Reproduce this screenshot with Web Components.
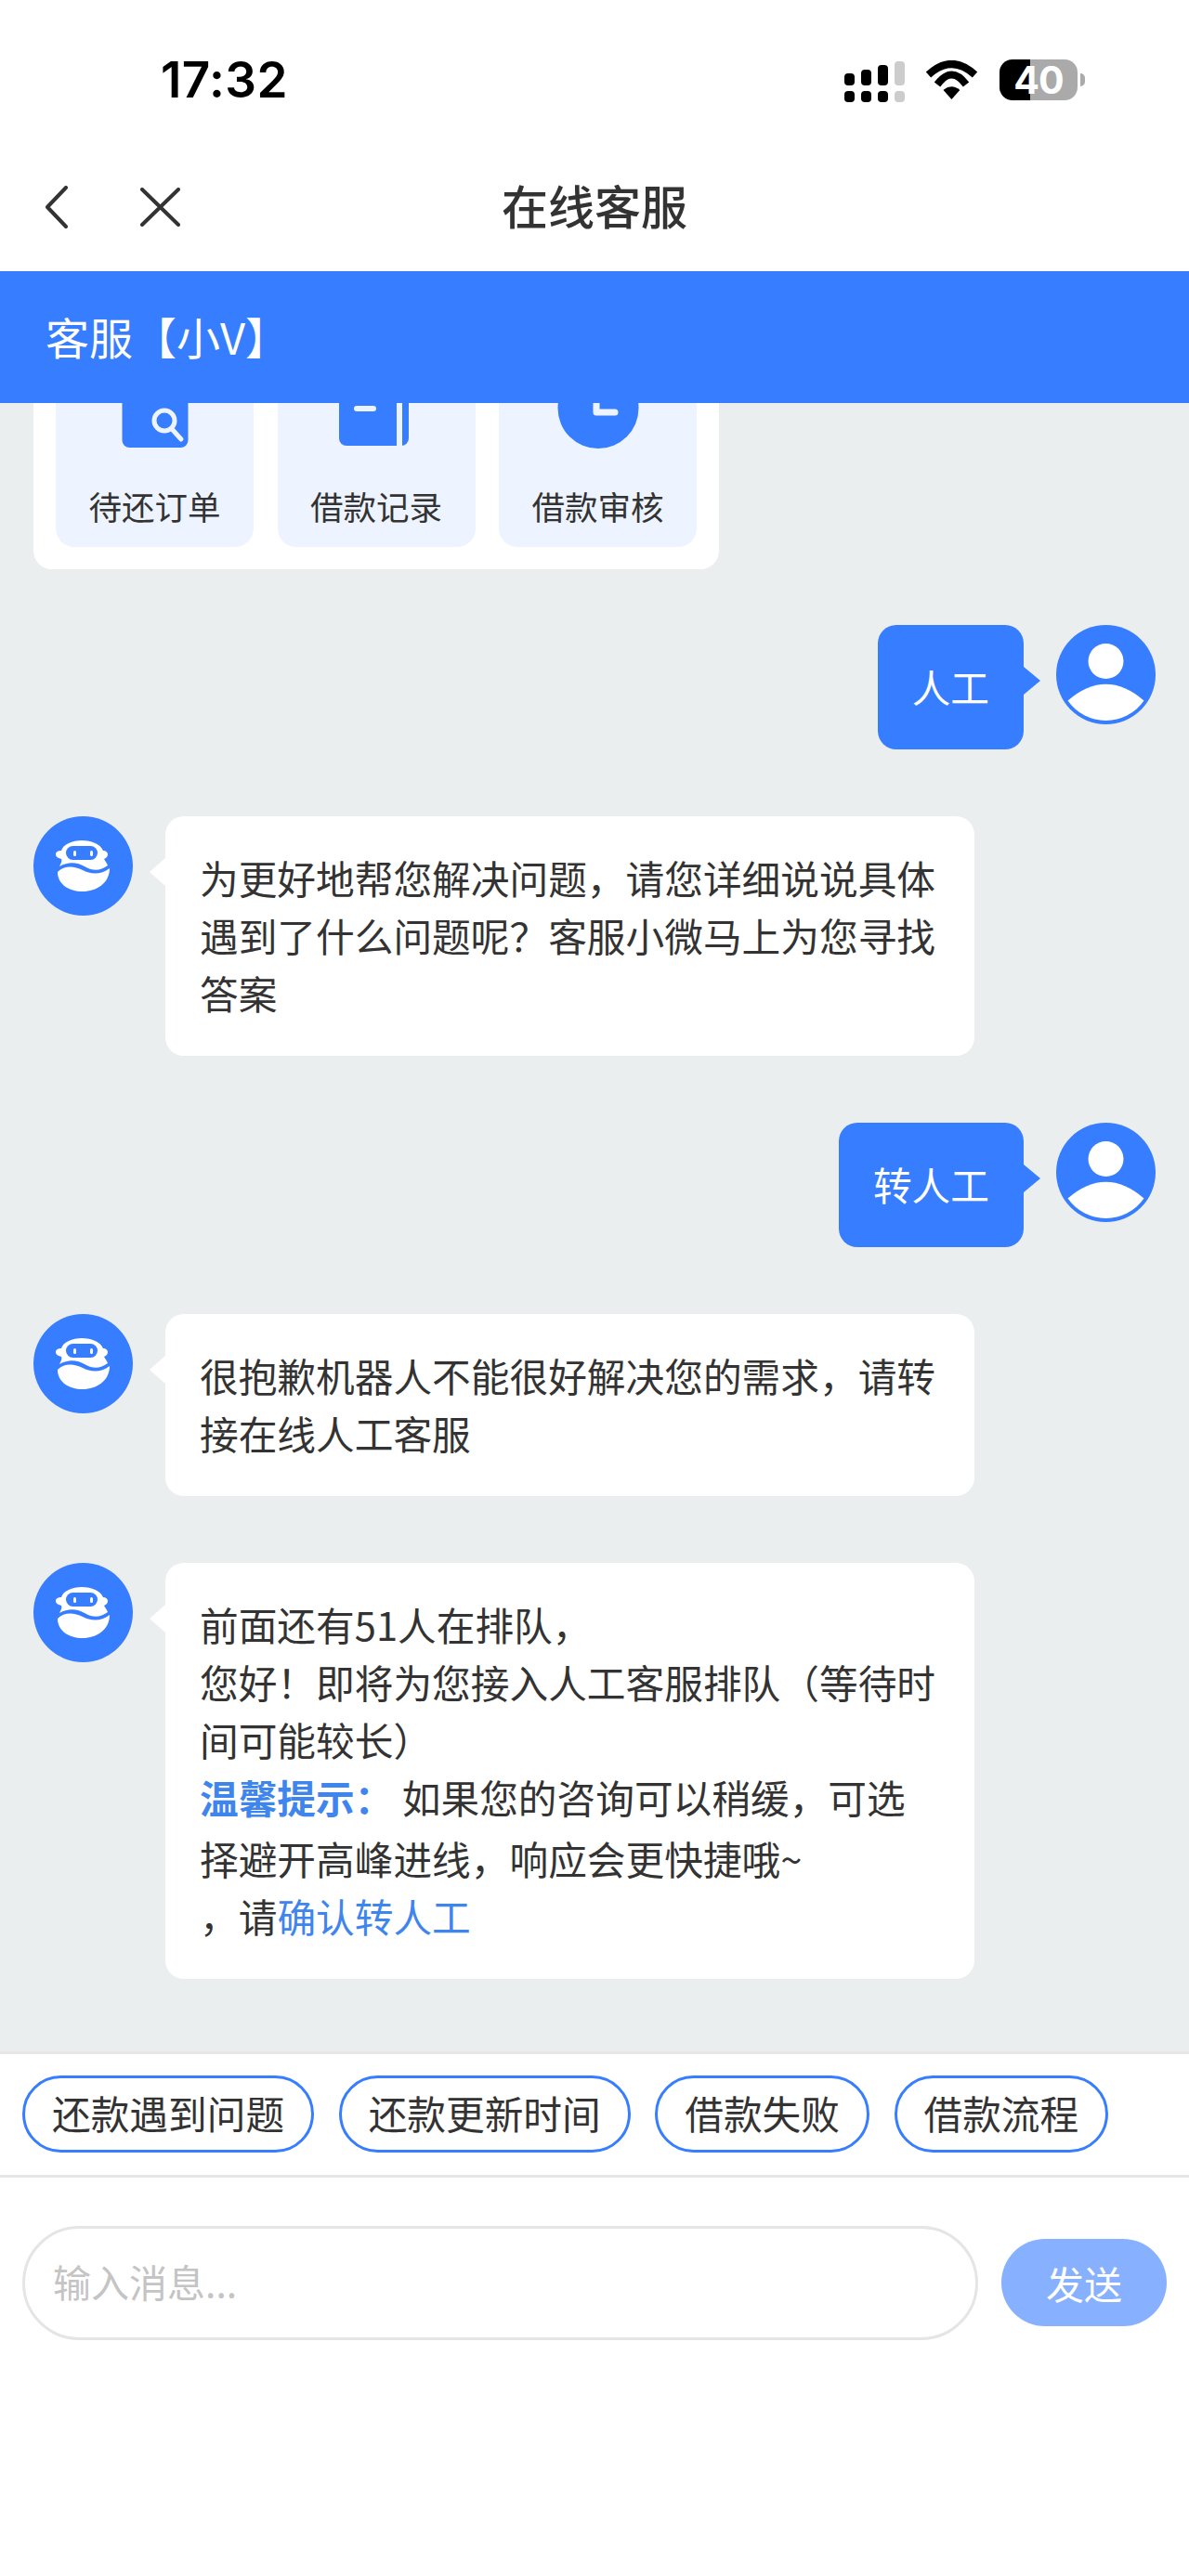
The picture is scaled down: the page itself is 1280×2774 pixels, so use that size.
<!DOCTYPE html>
<html lang="zh-CN">
<head>
<meta charset="utf-8">
<title>在线客服</title>
<style>
  html, body { margin: 0; padding: 0; background: #fff; }
  body { font-family: "Noto Sans CJK SC", "Noto Sans", sans-serif; color: #333; }
  .tip { color: #3f85ee; font-weight: 700; }
  .link { color: #3f85ee; }
  .after-tip { margin-top: 4px; }
</style>
</head>
<body>
<app-shell>
  <status-bar time="17:32" battery="40"></status-bar>
  <nav-bar title="在线客服"></nav-bar>
  <agent-bar>客服【小V】</agent-bar>
  <chat-list>
    <shortcut-card>
      <shortcut-tile icon="order">待还订单</shortcut-tile>
      <shortcut-tile icon="record">借款记录</shortcut-tile>
      <shortcut-tile icon="audit">借款审核</shortcut-tile>
    </shortcut-card>
    <chat-row side="user">人工</chat-row>
    <chat-row side="bot">为更好地帮您解决问题，请您详细说说具体遇到了什么问题呢？客服小微马上为您寻找答案</chat-row>
    <chat-row side="user">转人工</chat-row>
    <chat-row side="bot">很抱歉机器人不能很好解决您的需求，请转接在线人工客服</chat-row>
    <chat-row side="bot">
      <div>前面还有51人在排队，</div>
      <div>您好！即将为您接入人工客服排队（等待时间可能较长）</div>
      <div><span class="tip">温馨提示：</span> 如果您的咨询可以稍缓，可选</div>
      <div class="after-tip">择避开高峰进线，响应会更快捷哦~</div>
      <div>，请<span class="link">确认转人工</span></div>
    </chat-row>
  </chat-list>
  <quick-replies>
    <quick-chip>还款遇到问题</quick-chip>
    <quick-chip>还款更新时间</quick-chip>
    <quick-chip>借款失败</quick-chip>
    <quick-chip>借款流程</quick-chip>
  </quick-replies>
  <message-composer placeholder="输入消息..." action="发送"></message-composer>
</app-shell>

<script>
const BLUE = '#377dff';

class AppShell extends HTMLElement {
  constructor() {
    super();
    this.attachShadow({ mode: 'open' });
    this.shadowRoot.innerHTML = `
      <style>
        :host { display: flex; flex-direction: column; width: 1280px; height: 2774px; overflow: hidden; }
      </style>
      <slot></slot>
    `;
  }
}

class StatusBar extends HTMLElement {
  constructor() {
    super();
    this.attachShadow({ mode: 'open' });
  }

  connectedCallback() {
    const time = this.getAttribute('time') || '';
    const battery = this.getAttribute('battery') || '';
    this.shadowRoot.innerHTML = `
      <style>
        :host {
          display: flex;
          flex: none;
          justify-content: space-between;
          align-items: center;
          box-sizing: border-box;
          height: 112px;
          margin-bottom: 42px;
          padding: 60px 112px 0 173px;
          font-family: Inter, "Liberation Sans", sans-serif;
          color: #000;
        }
        .time { font-size: 53px; font-weight: 600; line-height: 52px; letter-spacing: 0.4px; }
        .icons { display: flex; align-items: center; }
        svg { display: block; }
        .wifi { margin: 0 23px 0 22px; }
        .battery {
          position: relative;
          width: 84px;
          height: 44px;
          margin-right: 8px;
          border-radius: 14px;
          background: linear-gradient(90deg, #000 39%, #aaa 39%);
          color: #fff;
          font-size: 41px;
          font-weight: 700;
          line-height: 44px;
          text-align: center;
          letter-spacing: -1px;
        }
        .battery::after {
          content: '';
          position: absolute;
          left: 87px;
          top: 15px;
          width: 5px;
          height: 14px;
          border-radius: 0 5px 5px 0;
          background: #aaa;
        }
      </style>
      <span class="time">${time}</span>
      <div class="icons">
        <svg width="65" height="48" viewBox="0 0 65 48">
          <rect x="0" y="17" width="11" height="13" rx="4"/>
          <rect x="18" y="13" width="11" height="17" rx="4"/>
          <rect x="36" y="8" width="11" height="22" rx="4"/>
          <rect x="54" y="4" width="11" height="26" rx="4" fill="#ccc"/>
          <rect x="0" y="36" width="11" height="12" rx="4"/>
          <rect x="18" y="36" width="11" height="12" rx="4"/>
          <rect x="36" y="36" width="11" height="12" rx="4"/>
          <rect x="54" y="36" width="11" height="12" rx="4" fill="#ccc"/>
        </svg>
        <svg class="wifi" width="57" height="42" viewBox="0 0 57 42">
          <path d="M3.5 15.5Q28.5-7.5 53.5 15.5M13 26Q28.5 5 44 26" fill="none" stroke="#000" stroke-width="8"/>
          <path d="M28.4 42L19.5 32Q28.4 24.5 37.3 32Z"/>
        </svg>
        <div class="battery">${battery}</div>
      </div>
    `;
  }
}

class NavBar extends HTMLElement {
  constructor() {
    super();
    this.attachShadow({ mode: 'open' });
  }

  connectedCallback() {
    this.shadowRoot.innerHTML = `
      <style>
        :host {
          display: grid;
          flex: none;
          grid-template-columns: 1fr auto 1fr;
          align-items: center;
          height: 138px;
          padding-left: 49px;
          box-sizing: border-box;
          color: #333;
        }
        .icons { display: flex; align-items: center; gap: 78px; }
        svg { display: block; fill: none; stroke: #333; stroke-width: 4; stroke-linecap: round; stroke-linejoin: round; }
        h1 { margin: 0 0 7px -49px; font-size: 50px; font-weight: 500; line-height: 70px; }
      </style>
      <div class="icons">
        <svg width="24" height="46" viewBox="0 0 24 46"><path d="M22 2L2 23L22 44"/></svg>
        <svg width="43" height="42" viewBox="0 0 43 42"><path d="M2 2L41 40M41 2L2 40"/></svg>
      </div>
      <h1>${this.getAttribute('title') || ''}</h1>
      <div></div>
    `;
  }
}

class AgentBar extends HTMLElement {
  constructor() {
    super();
    this.attachShadow({ mode: 'open' });
    this.shadowRoot.innerHTML = `
      <style>
        :host {
          display: flex;
          flex: none;
          align-items: center;
          height: 142px;
          padding: 0 0 3px 49px;
          box-sizing: border-box;
          background: ${BLUE};
          color: #fff;
          font-size: 47px;
        }
      </style>
      <slot></slot>
    `;
  }
}

class ChatList extends HTMLElement {
  constructor() {
    super();
    this.attachShadow({ mode: 'open' });
    // pinned to the bottom, older content runs off under the blue bar
    this.shadowRoot.innerHTML = `
      <style>
        :host {
          display: flex;
          flex: 1 1 0;
          flex-direction: column;
          justify-content: flex-end;
          min-height: 0;
          overflow: hidden;
          box-sizing: border-box;
          padding: 0 36px 78px;
          gap: 72px;
          background: #ebeeef;
        }
        ::slotted(*) { flex-shrink: 0; }
      </style>
      <slot></slot>
    `;
  }
}

class ShortcutCard extends HTMLElement {
  constructor() {
    super();
    this.attachShadow({ mode: 'open' });
    this.shadowRoot.innerHTML = `
      <style>
        :host {
          display: flex;
          align-self: flex-start;
          gap: 25.5px;
          padding: 24px;
          margin-bottom: -12px;
          background: #fff;
          border-radius: 20px;
        }
      </style>
      <slot></slot>
    `;
  }
}

class ShortcutTile extends HTMLElement {
  constructor() {
    super();
    this.attachShadow({ mode: 'open' });
  }

  connectedCallback() {
    const icons = {
      order: `<rect x="9.5" y="-20" width="71" height="108" rx="8" fill="${BLUE}"/>
        <circle cx="55" cy="59" r="11" fill="none" stroke="#edf4ff" stroke-width="5"/>
        <path d="M63 68L73 79" stroke="#edf4ff" stroke-width="5" stroke-linecap="round"/>`,
      record: `<rect x="5" y="-20" width="75" height="106" rx="8" fill="${BLUE}"/>
        <rect x="21" y="43" width="24" height="6" rx="3" fill="#edf4ff"/>
        <rect x="67" y="-20" width="6" height="106" fill="#edf4ff"/>`,
      audit: `<circle cx="45" cy="45.5" r="43.5" fill="${BLUE}"/>
        <path d="M43 20V50H63" fill="none" stroke="#edf4ff" stroke-width="7" stroke-linecap="round" stroke-linejoin="round"/>`
    };
    this.shadowRoot.innerHTML = `
      <style>
        :host {
          display: flex;
          flex-direction: column;
          align-items: center;
          width: 213px;
          padding: 44px 0 19px;
          box-sizing: border-box;
          background: #edf4ff;
          border-radius: 20px;
          color: #333;
          font-size: 35.5px;
          line-height: 50px;
        }
        svg { display: block; overflow: visible; margin-bottom: 36px; }
      </style>
      <svg width="90" height="90" viewBox="0 0 90 90">${icons[this.getAttribute('icon')] || ''}</svg>
      <slot></slot>
    `;
  }
}

class ChatRow extends HTMLElement {
  constructor() {
    super();
    this.attachShadow({ mode: 'open' });
  }

  connectedCallback() {
    const isUser = this.getAttribute('side') === 'user';
    const avatar = isUser
      ? `<circle cx="53.5" cy="53.5" r="53.5" fill="${BLUE}"/>
         <circle cx="53.5" cy="39" r="19" fill="#fff"/>
         <path d="M12.5 81.5Q53.5 46 94.5 81.5A50 50 0 0 1 12.5 81.5Z" fill="#fff"/>`
      : `<circle cx="53.5" cy="53.5" r="53.5" fill="${BLUE}"/>
         <path d="M24 41C24 38 27 37 30 37C32 30 42 26 52 26C63 26 72 30 75 37C78 37 80 39 80 41C80 44 78 45 76 46C77 48 79 50 80 53C72 59 64 59 56 54.5C47 49.5 38 48.5 28 54C30 50 31 48 30 46C27 45 24 44 24 41Z" fill="#fff"/>
         <rect x="35" y="32" width="34" height="15" rx="7.5" fill="${BLUE}"/>
         <rect x="43" y="37" width="3" height="6" rx="1.5" fill="#fff"/>
         <rect x="61" y="37" width="3" height="6" rx="1.5" fill="#fff"/>
         <path d="M26 60C33 53 43 53 53 58C62 63 73 63 82 56C82 72 68 81 53 81C38 81 26 73 26 60Z" fill="#fff"/>`;
    this.shadowRoot.innerHTML = `
      <style>
        :host {
          display: flex;
          flex-direction: ${isUser ? 'row-reverse' : 'row'};
          align-items: flex-start;
          gap: 35px;
          font-size: 41.7px;
          line-height: 62px;
        }
        svg { display: block; flex: none; }
        .bubble {
          position: relative;
          box-sizing: border-box;
          max-width: 871px;
          padding: 35px 37px 37px;
          border-radius: 20px;
          background: ${isUser ? BLUE : '#fff'};
          color: ${isUser ? '#fff' : '#333'};
        }
        .bubble::before {
          content: '';
          position: absolute;
          top: 45px;
          ${isUser ? 'right: -18px;' : 'left: -17px;'}
          border-style: solid;
          border-color: transparent;
          border-width: 15px ${isUser ? '0 15px 18px' : '17px 15px 0'};
          ${isUser ? `border-left-color: ${BLUE};` : 'border-right-color: #fff;'}
        }
      </style>
      <svg width="107" height="107" viewBox="0 0 107 107">${avatar}</svg>
      <div class="bubble"><slot></slot></div>
    `;
  }
}

class QuickReplies extends HTMLElement {
  constructor() {
    super();
    this.attachShadow({ mode: 'open' });
    this.shadowRoot.innerHTML = `
      <style>
        :host {
          display: flex;
          flex: none;
          gap: 26.5px;
          padding: 23px 24px 24px;
          border-top: 3px solid #e6e6e6;
          border-bottom: 3px solid #e6e6e6;
          background: #fff;
        }
      </style>
      <slot></slot>
    `;
  }
}

class QuickChip extends HTMLElement {
  constructor() {
    super();
    this.attachShadow({ mode: 'open' });
    this.shadowRoot.innerHTML = `
      <style>
        :host {
          display: flex;
          align-items: center;
          box-sizing: border-box;
          height: 83px;
          padding: 0 29px 3px;
          border: 3px solid ${BLUE};
          border-radius: 42px;
          color: #333;
          font-size: 41.7px;
          white-space: nowrap;
        }
      </style>
      <slot></slot>
    `;
  }
}

class MessageComposer extends HTMLElement {
  constructor() {
    super();
    this.attachShadow({ mode: 'open' });
  }

  connectedCallback() {
    this.shadowRoot.innerHTML = `
      <style>
        :host {
          display: flex;
          flex: none;
          box-sizing: border-box;
          height: 429px;
          align-items: flex-start;
          gap: 25px;
          padding: 52px 24px 0;
          background: #fff;
        }
        .input {
          display: flex;
          align-items: center;
          box-sizing: border-box;
          width: 1029px;
          height: 123px;
          padding: 0 30px 5px;
          border: 3px solid #e5e5e5;
          border-radius: 62px;
          color: #c4c4c4;
          font-size: 41px;
        }
        .send {
          display: flex;
          align-items: center;
          justify-content: center;
          width: 178px;
          height: 94px;
          margin-top: 14px;
          border-radius: 47px;
          background: #87b1ff;
          color: #fff;
          font-size: 41px;
        }
      </style>
      <div class="input">${this.getAttribute('placeholder') || ''}</div>
      <div class="send">${this.getAttribute('action') || ''}</div>
    `;
  }
}

customElements.define('app-shell', AppShell);
customElements.define('status-bar', StatusBar);
customElements.define('nav-bar', NavBar);
customElements.define('agent-bar', AgentBar);
customElements.define('chat-list', ChatList);
customElements.define('shortcut-card', ShortcutCard);
customElements.define('shortcut-tile', ShortcutTile);
customElements.define('chat-row', ChatRow);
customElements.define('quick-replies', QuickReplies);
customElements.define('quick-chip', QuickChip);
customElements.define('message-composer', MessageComposer);
</script>
</body>
</html>
